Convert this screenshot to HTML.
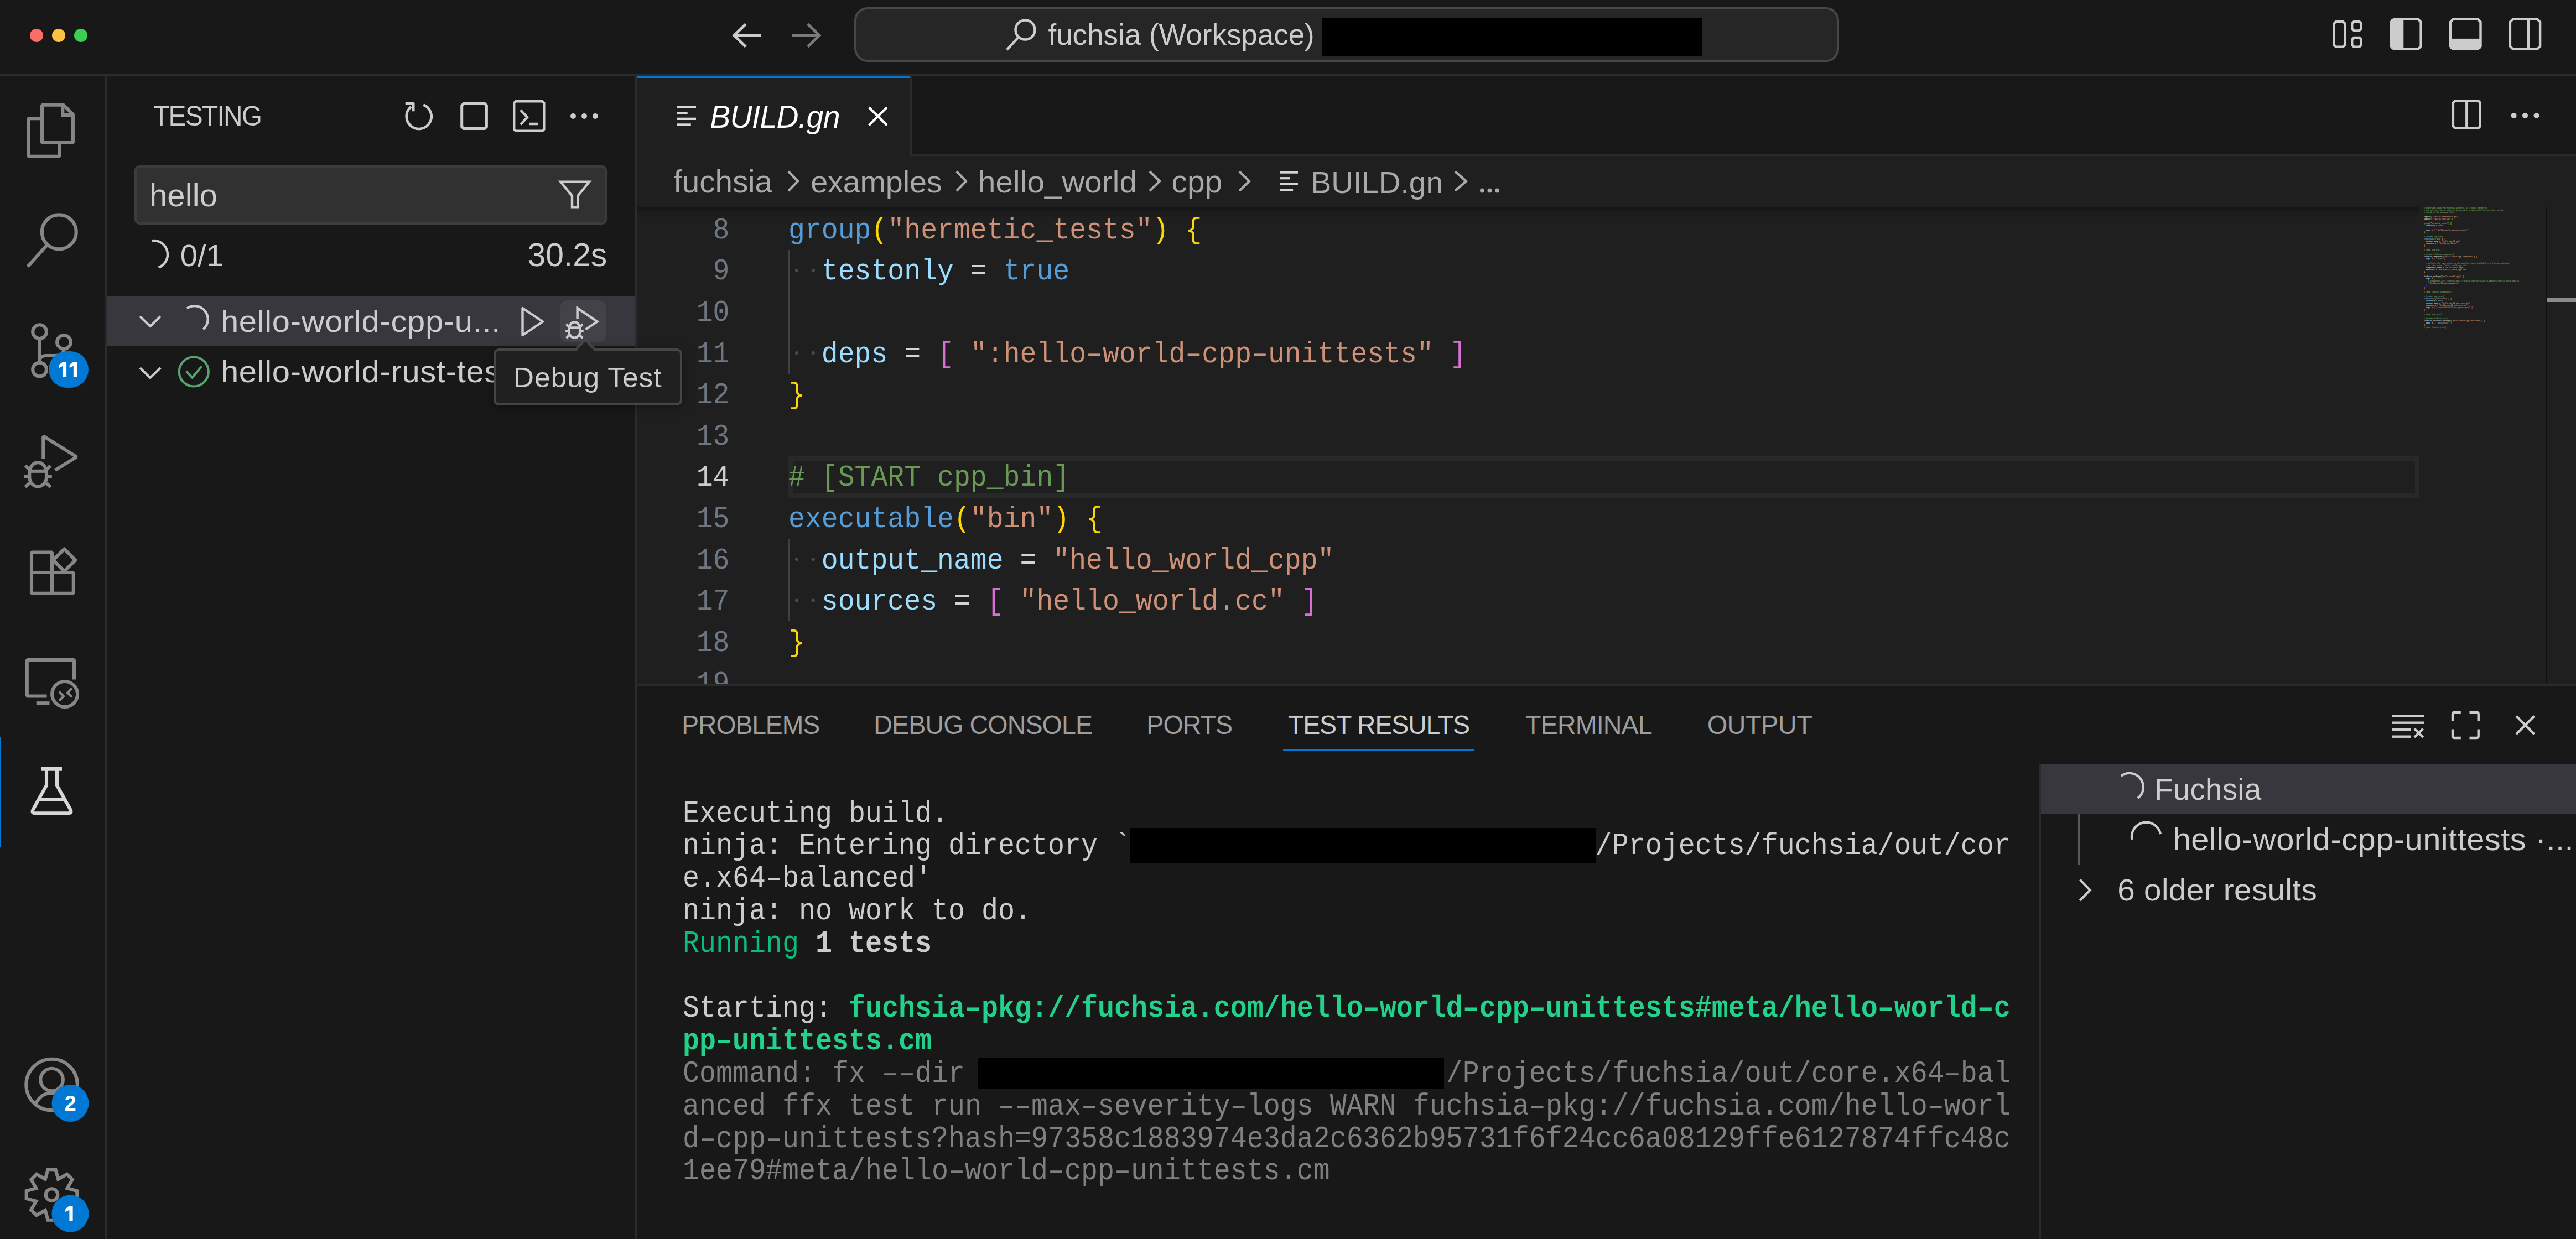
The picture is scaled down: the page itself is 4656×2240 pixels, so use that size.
<!DOCTYPE html>
<html><head><meta charset="utf-8"><style>
html,body{margin:0;padding:0;}
body{width:4656px;height:2240px;overflow:hidden;position:relative;background:#181818;font-family:'Liberation Sans', sans-serif;}
</style></head><body>
<div style="position:absolute;left:0px;top:0px;width:4656px;height:133px;background:#181818;"></div><div style="position:absolute;left:0px;top:133px;width:4656px;height:4px;background:#2b2b2b;"></div><div style="position:absolute;left:0px;top:137px;width:189px;height:2103px;background:#181818;"></div><div style="position:absolute;left:189px;top:137px;width:4px;height:2103px;background:#2b2b2b;"></div><div style="position:absolute;left:193px;top:137px;width:954px;height:2103px;background:#181818;"></div><div style="position:absolute;left:1147px;top:137px;width:4px;height:2103px;background:#2b2b2b;"></div><div style="position:absolute;left:1151px;top:137px;width:3505px;height:141px;background:#181818;"></div><div style="position:absolute;left:1649px;top:278px;width:3007px;height:4px;background:#2b2b2b;"></div><div style="position:absolute;left:1151px;top:137px;width:494px;height:145px;background:#1f1f1f;"></div><div style="position:absolute;left:1151px;top:137px;width:494px;height:4px;background:#0078d4;"></div><div style="position:absolute;left:1645px;top:137px;width:4px;height:145px;background:#2b2b2b;"></div><div style="position:absolute;left:1151px;top:282px;width:3505px;height:954px;background:#1f1f1f;"></div><div style="position:absolute;left:1151px;top:1236px;width:3505px;height:4px;background:#2b2b2b;"></div><div style="position:absolute;left:1151px;top:1240px;width:3505px;height:1000px;background:#181818;"></div><div style="position:absolute;left:1544px;top:13px;width:1780px;height:99px;box-sizing:border-box;border:4px solid #474747;border-radius:24px;background:#262626"></div><div style="position:absolute;left:1894.47px;top:36.71px;font-family:'Liberation Sans', sans-serif;font-size:52.91px;line-height:52.91px;color:#cccccc;font-weight:normal;font-style:normal;white-space:pre;">fuchsia (Workspace)</div><div style="position:absolute;left:2390px;top:32px;width:687px;height:69px;background:#000000;"></div><div style="position:absolute;left:0px;top:1332px;width:2px;height:199px;background:#0078d4;"></div><div style="position:absolute;left:277.04px;top:186.51px;font-family:'Liberation Sans', sans-serif;font-size:47.83px;line-height:47.83px;color:#cccccc;font-weight:normal;font-style:normal;white-space:pre;letter-spacing:-1.71px;transform:scaleY(1.051);transform-origin:0 40.49px;">TESTING</div><div style="position:absolute;left:243px;top:299px;width:854px;height:107px;box-sizing:border-box;border:4px solid #3c3c3c;border-radius:9px;background:#313131"></div><div style="position:absolute;left:269.94px;top:323.88px;font-family:'Liberation Sans', sans-serif;font-size:58.03px;line-height:58.03px;color:#cccccc;font-weight:normal;font-style:normal;white-space:pre;letter-spacing:0.11px;">hello</div><div style="position:absolute;left:325.75px;top:434.35px;font-family:'Liberation Sans', sans-serif;font-size:56.29px;line-height:56.29px;color:#cccccc;font-weight:normal;font-style:normal;white-space:pre;">0/1</div><div style="position:absolute;left:953.45px;top:432.23px;font-family:'Liberation Sans', sans-serif;font-size:58.8px;line-height:58.8px;color:#cccccc;font-weight:normal;font-style:normal;white-space:pre;">30.2s</div><div style="position:absolute;left:193px;top:535px;width:954px;height:91px;background:#37373d;"></div><div style="position:absolute;left:398.95px;top:552.30px;font-family:'Liberation Sans', sans-serif;font-size:57.88px;line-height:57.88px;color:#cccccc;font-weight:normal;font-style:normal;white-space:pre;letter-spacing:0.7px;transform:scaleY(0.973);transform-origin:0 49.00px;">hello-world-cpp-u...</div><div style="position:absolute;left:1013px;top:543px;width:82px;height:75px;border-radius:12px;background:#424248"></div><div style="position:absolute;left:398.95px;top:643.30px;font-family:'Liberation Sans', sans-serif;font-size:57.88px;line-height:57.88px;color:#cccccc;font-weight:normal;font-style:normal;white-space:pre;letter-spacing:0.7px;transform:scaleY(0.973);transform-origin:0 49.00px;">hello-world-rust-tests</div><div style="position:absolute;left:892px;top:630px;width:341px;height:103px;box-sizing:border-box;border:4px solid #454545;border-radius:10px;background:#202020;box-shadow:0 4px 16px rgba(0,0,0,0.36)"></div><div style="position:absolute;left:927.87px;top:657.30px;font-family:'Liberation Sans', sans-serif;font-size:51.62px;line-height:51.62px;color:#cccccc;font-weight:normal;font-style:normal;white-space:pre;letter-spacing:0.83px;transform:scaleY(0.971);transform-origin:0 43.70px;">Debug Test</div><div style="position:absolute;left:1283.34px;top:185.27px;font-family:'Liberation Sans', sans-serif;font-size:55.44px;line-height:55.44px;color:#ffffff;font-weight:normal;font-style:italic;white-space:pre;letter-spacing:-0.74px;transform:scaleY(1.022);transform-origin:0 46.93px;">BUILD.gn</div><div style="position:absolute;left:1217.23px;top:301.25px;font-family:'Liberation Sans', sans-serif;font-size:56.65px;line-height:56.65px;color:#a9a9a9;font-weight:normal;font-style:normal;white-space:pre;letter-spacing:-0.1px;">fuchsia</div><div style="position:absolute;left:1465.27px;top:302.02px;font-family:'Liberation Sans', sans-serif;font-size:55.74px;line-height:55.74px;color:#a9a9a9;font-weight:normal;font-style:normal;white-space:pre;letter-spacing:-0.17px;">examples</div><div style="position:absolute;left:1768.05px;top:301.49px;font-family:'Liberation Sans', sans-serif;font-size:56.36px;line-height:56.36px;color:#a9a9a9;font-weight:normal;font-style:normal;white-space:pre;letter-spacing:0.17px;">hello_world</div><div style="position:absolute;left:2117.50px;top:301.12px;font-family:'Liberation Sans', sans-serif;font-size:56.8px;line-height:56.8px;color:#a9a9a9;font-weight:normal;font-style:normal;white-space:pre;">cpp</div><div style="position:absolute;left:2369.60px;top:302.63px;font-family:'Liberation Sans', sans-serif;font-size:55.01px;line-height:55.01px;color:#a9a9a9;font-weight:normal;font-style:normal;white-space:pre;">BUILD.gn</div><div style="position:absolute;left:1151px;top:374px;width:3222px;height:22px;background:linear-gradient(rgba(0,0,0,0.36),rgba(0,0,0,0.12) 40%,rgba(0,0,0,0))"></div><div style="position:absolute;left:0;top:0;width:4656px;height:2240px;clip-path:inset(374px 0 1004px 1151px)"><div style="position:absolute;left:1425px;top:825px;width:2948px;height:75px;box-sizing:border-box;border:8px solid #282828"></div><div style="position:absolute;left:1424px;top:452.0px;width:4px;height:223.79999999999995px;background:#404040;"></div><div style="position:absolute;left:1424px;top:974.2px;width:4px;height:149.20000000000005px;background:#404040;"></div><div style="position:absolute;left:1288.60px;top:393.83px;font-family:'Liberation Mono', monospace;font-size:49.825859454415166px;line-height:49.825859454415166px;color:#6e7681;font-weight:normal;font-style:normal;white-space:pre;transform:scaleY(1.08);transform-origin:0 38.17px;">8</div><div style="position:absolute;left:1425.00px;top:393.83px;font-family:'Liberation Mono', monospace;font-size:49.825859454415166px;line-height:49.825859454415166px;color:#d4d4d4;font-weight:normal;font-style:normal;white-space:pre;transform:scaleY(1.08);transform-origin:0 38.17px;"><span style="color:#569cd6">group</span><span style="color:#ffd700">(</span><span style="color:#ce9178">&quot;hermetic_tests&quot;</span><span style="color:#ffd700">)</span><span style="color:#d4d4d4"> </span><span style="color:#ffd700">{</span></div><div style="position:absolute;left:1288.60px;top:468.43px;font-family:'Liberation Mono', monospace;font-size:49.825859454415166px;line-height:49.825859454415166px;color:#6e7681;font-weight:normal;font-style:normal;white-space:pre;transform:scaleY(1.08);transform-origin:0 38.17px;">9</div><div style="position:absolute;left:1425.00px;top:468.43px;font-family:'Liberation Mono', monospace;font-size:49.825859454415166px;line-height:49.825859454415166px;color:#d4d4d4;font-weight:normal;font-style:normal;white-space:pre;transform:scaleY(1.08);transform-origin:0 38.17px;">  <span style="color:#9cdcfe">testonly</span><span style="color:#d4d4d4"> = </span><span style="color:#569cd6">true</span></div><div style="position:absolute;left:1258.70px;top:543.03px;font-family:'Liberation Mono', monospace;font-size:49.825859454415166px;line-height:49.825859454415166px;color:#6e7681;font-weight:normal;font-style:normal;white-space:pre;transform:scaleY(1.08);transform-origin:0 38.17px;">10</div><div style="position:absolute;left:1258.70px;top:617.63px;font-family:'Liberation Mono', monospace;font-size:49.825859454415166px;line-height:49.825859454415166px;color:#6e7681;font-weight:normal;font-style:normal;white-space:pre;transform:scaleY(1.08);transform-origin:0 38.17px;">11</div><div style="position:absolute;left:1425.00px;top:617.63px;font-family:'Liberation Mono', monospace;font-size:49.825859454415166px;line-height:49.825859454415166px;color:#d4d4d4;font-weight:normal;font-style:normal;white-space:pre;transform:scaleY(1.08);transform-origin:0 38.17px;">  <span style="color:#9cdcfe">deps</span><span style="color:#d4d4d4"> = </span><span style="color:#da70d6">[</span><span style="color:#d4d4d4"> </span><span style="color:#ce9178">&quot;:hello–world–cpp–unittests&quot;</span><span style="color:#d4d4d4"> </span><span style="color:#da70d6">]</span></div><div style="position:absolute;left:1258.70px;top:692.23px;font-family:'Liberation Mono', monospace;font-size:49.825859454415166px;line-height:49.825859454415166px;color:#6e7681;font-weight:normal;font-style:normal;white-space:pre;transform:scaleY(1.08);transform-origin:0 38.17px;">12</div><div style="position:absolute;left:1425.00px;top:692.23px;font-family:'Liberation Mono', monospace;font-size:49.825859454415166px;line-height:49.825859454415166px;color:#d4d4d4;font-weight:normal;font-style:normal;white-space:pre;transform:scaleY(1.08);transform-origin:0 38.17px;"><span style="color:#ffd700">}</span></div><div style="position:absolute;left:1258.70px;top:766.83px;font-family:'Liberation Mono', monospace;font-size:49.825859454415166px;line-height:49.825859454415166px;color:#6e7681;font-weight:normal;font-style:normal;white-space:pre;transform:scaleY(1.08);transform-origin:0 38.17px;">13</div><div style="position:absolute;left:1258.70px;top:841.43px;font-family:'Liberation Mono', monospace;font-size:49.825859454415166px;line-height:49.825859454415166px;color:#cccccc;font-weight:normal;font-style:normal;white-space:pre;transform:scaleY(1.08);transform-origin:0 38.17px;">14</div><div style="position:absolute;left:1425.00px;top:841.43px;font-family:'Liberation Mono', monospace;font-size:49.825859454415166px;line-height:49.825859454415166px;color:#d4d4d4;font-weight:normal;font-style:normal;white-space:pre;transform:scaleY(1.08);transform-origin:0 38.17px;"><span style="color:#6a9955"># [START cpp_bin]</span></div><div style="position:absolute;left:1258.70px;top:916.03px;font-family:'Liberation Mono', monospace;font-size:49.825859454415166px;line-height:49.825859454415166px;color:#6e7681;font-weight:normal;font-style:normal;white-space:pre;transform:scaleY(1.08);transform-origin:0 38.17px;">15</div><div style="position:absolute;left:1425.00px;top:916.03px;font-family:'Liberation Mono', monospace;font-size:49.825859454415166px;line-height:49.825859454415166px;color:#d4d4d4;font-weight:normal;font-style:normal;white-space:pre;transform:scaleY(1.08);transform-origin:0 38.17px;"><span style="color:#569cd6">executable</span><span style="color:#ffd700">(</span><span style="color:#ce9178">&quot;bin&quot;</span><span style="color:#ffd700">)</span><span style="color:#d4d4d4"> </span><span style="color:#ffd700">{</span></div><div style="position:absolute;left:1258.70px;top:990.63px;font-family:'Liberation Mono', monospace;font-size:49.825859454415166px;line-height:49.825859454415166px;color:#6e7681;font-weight:normal;font-style:normal;white-space:pre;transform:scaleY(1.08);transform-origin:0 38.17px;">16</div><div style="position:absolute;left:1425.00px;top:990.63px;font-family:'Liberation Mono', monospace;font-size:49.825859454415166px;line-height:49.825859454415166px;color:#d4d4d4;font-weight:normal;font-style:normal;white-space:pre;transform:scaleY(1.08);transform-origin:0 38.17px;">  <span style="color:#9cdcfe">output_name</span><span style="color:#d4d4d4"> = </span><span style="color:#ce9178">&quot;hello_world_cpp&quot;</span></div><div style="position:absolute;left:1258.70px;top:1065.23px;font-family:'Liberation Mono', monospace;font-size:49.825859454415166px;line-height:49.825859454415166px;color:#6e7681;font-weight:normal;font-style:normal;white-space:pre;transform:scaleY(1.08);transform-origin:0 38.17px;">17</div><div style="position:absolute;left:1425.00px;top:1065.23px;font-family:'Liberation Mono', monospace;font-size:49.825859454415166px;line-height:49.825859454415166px;color:#d4d4d4;font-weight:normal;font-style:normal;white-space:pre;transform:scaleY(1.08);transform-origin:0 38.17px;">  <span style="color:#9cdcfe">sources</span><span style="color:#d4d4d4"> = </span><span style="color:#da70d6">[</span><span style="color:#d4d4d4"> </span><span style="color:#ce9178">&quot;hello_world.cc&quot;</span><span style="color:#d4d4d4"> </span><span style="color:#da70d6">]</span></div><div style="position:absolute;left:1258.70px;top:1139.83px;font-family:'Liberation Mono', monospace;font-size:49.825859454415166px;line-height:49.825859454415166px;color:#6e7681;font-weight:normal;font-style:normal;white-space:pre;transform:scaleY(1.08);transform-origin:0 38.17px;">18</div><div style="position:absolute;left:1425.00px;top:1139.83px;font-family:'Liberation Mono', monospace;font-size:49.825859454415166px;line-height:49.825859454415166px;color:#d4d4d4;font-weight:normal;font-style:normal;white-space:pre;transform:scaleY(1.08);transform-origin:0 38.17px;"><span style="color:#ffd700">}</span></div><div style="position:absolute;left:1258.70px;top:1214.43px;font-family:'Liberation Mono', monospace;font-size:49.825859454415166px;line-height:49.825859454415166px;color:#6e7681;font-weight:normal;font-style:normal;white-space:pre;transform:scaleY(1.08);transform-origin:0 38.17px;">19</div></div><div style="position:absolute;left:4602px;top:374px;width:1px;height:862px;background:#111111;"></div><div style="position:absolute;left:4602px;top:374px;width:54px;height:1px;background:#111111;"></div><div style="position:absolute;left:4603px;top:538px;width:53px;height:8px;background:#8b8b8b;"></div><div style="position:absolute;left:1232.29px;top:1287.75px;font-family:'Liberation Sans', sans-serif;font-size:46.37px;line-height:46.37px;color:#9d9d9d;font-weight:normal;font-style:normal;white-space:pre;letter-spacing:-1.12px;transform:scaleY(1.031);transform-origin:0 39.25px;">PROBLEMS</div><div style="position:absolute;left:1579.27px;top:1287.57px;font-family:'Liberation Sans', sans-serif;font-size:46.58px;line-height:46.58px;color:#9d9d9d;font-weight:normal;font-style:normal;white-space:pre;letter-spacing:-0.88px;transform:scaleY(1.026);transform-origin:0 39.43px;">DEBUG CONSOLE</div><div style="position:absolute;left:2072.27px;top:1287.53px;font-family:'Liberation Sans', sans-serif;font-size:46.63px;line-height:46.63px;color:#9d9d9d;font-weight:normal;font-style:normal;white-space:pre;letter-spacing:-0.97px;transform:scaleY(1.025);transform-origin:0 39.47px;">PORTS</div><div style="position:absolute;left:2328.07px;top:1287.90px;font-family:'Liberation Sans', sans-serif;font-size:46.55px;line-height:46.55px;color:#cccccc;font-weight:normal;font-style:normal;white-space:pre;letter-spacing:-1.21px;transform:scaleY(1.039);transform-origin:0 39.40px;">TEST RESULTS</div><div style="position:absolute;left:2319px;top:1354px;width:346px;height:4px;background:#0078d4;"></div><div style="position:absolute;left:2757.07px;top:1287.54px;font-family:'Liberation Sans', sans-serif;font-size:46.61px;line-height:46.61px;color:#9d9d9d;font-weight:normal;font-style:normal;white-space:pre;letter-spacing:-0.86px;transform:scaleY(1.026);transform-origin:0 39.46px;">TERMINAL</div><div style="position:absolute;left:3085.65px;top:1287.17px;font-family:'Liberation Sans', sans-serif;font-size:47.05px;line-height:47.05px;color:#9d9d9d;font-weight:normal;font-style:normal;white-space:pre;letter-spacing:-0.62px;transform:scaleY(1.016);transform-origin:0 39.83px;">OUTPUT</div><div style="position:absolute;left:1234.00px;top:1447.70px;font-family:'Liberation Mono', monospace;font-size:49.99250112483127px;line-height:49.99250112483127px;color:#cccccc;font-weight:normal;font-style:normal;white-space:pre;transform:scaleY(1.1);transform-origin:0 38.30px;"><span style="color:#cccccc;font-weight:normal">Executing build.</span></div><div style="position:absolute;left:1234.00px;top:1506.48px;font-family:'Liberation Mono', monospace;font-size:49.99250112483127px;line-height:49.99250112483127px;color:#cccccc;font-weight:normal;font-style:normal;white-space:pre;transform:scaleY(1.1);transform-origin:0 38.30px;"><span style="color:#cccccc;font-weight:normal">ninja: Entering directory `</span><span style="color:#cccccc;font-weight:normal">                            </span><span style="color:#cccccc;font-weight:normal">/Projects/fuchsia/out/cor</span></div><div style="position:absolute;left:2043px;top:1496.5px;width:840.5px;height:64.5px;background:#000000;"></div><div style="position:absolute;left:1234.00px;top:1565.26px;font-family:'Liberation Mono', monospace;font-size:49.99250112483127px;line-height:49.99250112483127px;color:#cccccc;font-weight:normal;font-style:normal;white-space:pre;transform:scaleY(1.1);transform-origin:0 38.30px;"><span style="color:#cccccc;font-weight:normal">e.x64–balanced&#x27;</span></div><div style="position:absolute;left:1234.00px;top:1624.04px;font-family:'Liberation Mono', monospace;font-size:49.99250112483127px;line-height:49.99250112483127px;color:#cccccc;font-weight:normal;font-style:normal;white-space:pre;transform:scaleY(1.1);transform-origin:0 38.30px;"><span style="color:#cccccc;font-weight:normal">ninja: no work to do.</span></div><div style="position:absolute;left:1234.00px;top:1682.82px;font-family:'Liberation Mono', monospace;font-size:49.99250112483127px;line-height:49.99250112483127px;color:#cccccc;font-weight:normal;font-style:normal;white-space:pre;transform:scaleY(1.1);transform-origin:0 38.30px;"><span style="color:#0dbc79;font-weight:normal">Running</span><span style="color:#cccccc;font-weight:bold"> 1 tests</span></div><div style="position:absolute;left:1234.00px;top:1800.38px;font-family:'Liberation Mono', monospace;font-size:49.99250112483127px;line-height:49.99250112483127px;color:#cccccc;font-weight:normal;font-style:normal;white-space:pre;transform:scaleY(1.1);transform-origin:0 38.30px;"><span style="color:#cccccc;font-weight:normal">Starting: </span><span style="color:#23d18b;font-weight:bold">fuchsia–pkg://fuchsia.com/hello–world–cpp–unittests#meta/hello–world–c</span></div><div style="position:absolute;left:1234.00px;top:1859.16px;font-family:'Liberation Mono', monospace;font-size:49.99250112483127px;line-height:49.99250112483127px;color:#cccccc;font-weight:normal;font-style:normal;white-space:pre;transform:scaleY(1.1);transform-origin:0 38.30px;"><span style="color:#23d18b;font-weight:bold">pp–unittests.cm</span></div><div style="position:absolute;left:1234.00px;top:1917.94px;font-family:'Liberation Mono', monospace;font-size:49.99250112483127px;line-height:49.99250112483127px;color:#cccccc;font-weight:normal;font-style:normal;white-space:pre;transform:scaleY(1.1);transform-origin:0 38.30px;"><span style="color:#808080;font-weight:normal">Command: fx ––dir </span><span style="color:#808080;font-weight:normal">                            </span><span style="color:#808080;font-weight:normal">/Projects/fuchsia/out/core.x64–bal</span></div><div style="position:absolute;left:1768px;top:1913px;width:842px;height:56px;background:#000000;"></div><div style="position:absolute;left:1234.00px;top:1976.72px;font-family:'Liberation Mono', monospace;font-size:49.99250112483127px;line-height:49.99250112483127px;color:#cccccc;font-weight:normal;font-style:normal;white-space:pre;transform:scaleY(1.1);transform-origin:0 38.30px;"><span style="color:#808080;font-weight:normal">anced ffx test run ––max–severity–logs WARN fuchsia–pkg://fuchsia.com/hello–worl</span></div><div style="position:absolute;left:1234.00px;top:2035.50px;font-family:'Liberation Mono', monospace;font-size:49.99250112483127px;line-height:49.99250112483127px;color:#cccccc;font-weight:normal;font-style:normal;white-space:pre;transform:scaleY(1.1);transform-origin:0 38.30px;"><span style="color:#808080;font-weight:normal">d–cpp–unittests?hash=97358c1883974e3da2c6362b95731f6f24cc6a08129ffe6127874ffc48c</span></div><div style="position:absolute;left:1234.00px;top:2094.28px;font-family:'Liberation Mono', monospace;font-size:49.99250112483127px;line-height:49.99250112483127px;color:#cccccc;font-weight:normal;font-style:normal;white-space:pre;transform:scaleY(1.1);transform-origin:0 38.30px;"><span style="color:#808080;font-weight:normal">1ee79#meta/hello–world–cpp–unittests.cm</span></div><div style="position:absolute;left:3627px;top:1381px;width:1px;height:859px;background:#050505;"></div><div style="position:absolute;left:3627px;top:1381px;width:58px;height:1px;background:#050505;"></div><div style="position:absolute;left:3685px;top:1381px;width:4px;height:859px;background:#2b2b2b;"></div><div style="position:absolute;left:3689px;top:1381px;width:967px;height:91px;background:#37373d;"></div><div style="position:absolute;left:3894.22px;top:1400.21px;font-family:'Liberation Sans', sans-serif;font-size:54.8px;line-height:54.8px;color:#cccccc;font-weight:normal;font-style:normal;white-space:pre;letter-spacing:0.17px;">Fuchsia</div><div style="position:absolute;left:3755px;top:1472px;width:4px;height:91px;background:#585858;"></div><div style="position:absolute;left:3927.65px;top:1489.24px;font-family:'Liberation Sans', sans-serif;font-size:57.84px;line-height:57.84px;color:#cccccc;font-weight:normal;font-style:normal;white-space:pre;letter-spacing:0.47px;transform:scaleY(0.98);transform-origin:0 48.96px;">hello-world-cpp-unittests ·...</div><div style="position:absolute;left:3827.17px;top:1581.11px;font-family:'Liberation Sans', sans-serif;font-size:56.58px;line-height:56.58px;color:#cccccc;font-weight:normal;font-style:normal;white-space:pre;letter-spacing:0.37px;transform:scaleY(0.985);transform-origin:0 47.89px;">6 older results</div>
<svg width="4656" height="2240" style="position:absolute;left:0;top:0">
<circle cx="66" cy="64" r="12" fill="#fc6d67"/><circle cx="106" cy="64" r="12" fill="#fdc243"/><circle cx="146" cy="64" r="12" fill="#3ecd53"/><path d="M1376 64 H1328 M1348 43.5 L1327 64 L1348 84.5" stroke="#cccccc" stroke-width="5" fill="none"/><path d="M1432 64 H1480 M1460 43.5 L1481 64 L1460 84.5" stroke="#7a7a7a" stroke-width="5" fill="none"/><circle cx="1853" cy="54" r="17.5" stroke="#cccccc" stroke-width="4.5" fill="none"/><path d="M1841 67 L1820 90" stroke="#cccccc" stroke-width="4.5" fill="none"/><path d="M4222.2 39 H4234.8 L4238.8 43 V80.8 L4234.8 84.8 H4222.2 L4218.2 80.8 V43 Z" stroke="#cccccc" stroke-width="4.4" fill="none"/><path d="M4254.7 39 H4264.3 L4267.8 42.5 V51.9 L4264.3 55.4 H4254.7 L4251.2 51.9 V42.5 Z" stroke="#cccccc" stroke-width="4.4" fill="none"/><path d="M4254.7 68 H4264.3 L4267.8 71.5 V81.3 L4264.3 84.8 H4254.7 L4251.2 81.3 V71.5 Z" stroke="#cccccc" stroke-width="4.4" fill="none"/><path d="M4326.7 34.7 H4370.6 L4375.6 39.7 V83.7 L4370.6 88.7 H4326.7 L4321.7 83.7 V39.7 Z" stroke="#cccccc" stroke-width="4.4" fill="none"/><rect x="4321.7" y="34.7" width="22.6" height="54" fill="#cccccc"/><path d="M4434 34.7 H4478.5 L4483.5 39.7 V83.7 L4478.5 88.7 H4434 L4429 83.7 V39.7 Z" stroke="#cccccc" stroke-width="4.4" fill="none"/><rect x="4429" y="69.9" width="54.5" height="18.8" fill="#cccccc"/><path d="M4541.9 34.7 H4586.1 L4591.1 39.7 V83.7 L4586.1 88.7 H4541.9 L4536.9 83.7 V39.7 Z" stroke="#cccccc" stroke-width="4.4" fill="none"/><path d="M4570 35 V88" stroke="#cccccc" stroke-width="4.4" fill="none"/><path d="M76 214.1 H51.1 V282.8 H107.1 V258" stroke="#868686" stroke-width="6.1" fill="none" stroke-linejoin="bevel"/><path d="M76 189.8 H115 L131.9 206.8 V258 H76 Z" stroke="#868686" stroke-width="6.1" fill="none" stroke-linejoin="bevel"/><path d="M113.3 189.8 V208 H131.9" stroke="#868686" stroke-width="6.1" fill="none" stroke-linejoin="miter"/><circle cx="106.8" cy="419.4" r="31" stroke="#868686" stroke-width="6.1" fill="none"/><path d="M85 443 L50 482" stroke="#868686" stroke-width="6.1" fill="none"/><circle cx="71.6" cy="599.7" r="12.4" stroke="#868686" stroke-width="6.1" fill="none"/><circle cx="115.5" cy="618.4" r="12.4" stroke="#868686" stroke-width="6.1" fill="none"/><circle cx="71.6" cy="668" r="12.4" stroke="#868686" stroke-width="6.1" fill="none"/><path d="M71.6 612 V655.6 M71.6 652 C71.6 646 76 643 84 643 H100 C110 643 115.5 638 115.5 631" stroke="#868686" stroke-width="6.1" fill="none"/><path d="M78.3 829 V788.4 L138.6 826 L99.8 850" stroke="#868686" stroke-width="6.1" fill="none" stroke-linejoin="bevel"/><g transform="translate(68.6,858) scale(1.0)" stroke="#868686" stroke-width="6.1" fill="none"><path d="M-15.4 4 C-15.4 14 -8.6 21.7 0 21.7 C8.6 21.7 15.4 14 15.4 4 V-2 C15.4 -12 9.4 -21.9 0 -21.9 C-9.4 -21.9 -15.4 -12 -15.4 -2 Z"/><path d="M-13.5 -6.2 H13.5"/><path d="M-22.9 -16.1 L-16 -9.3 M22.8 -16.1 L16 -9.3 M-25 3 H-16 M16 3 H25.2 M-22.9 22.7 L-15.5 15.4 M22.8 22.7 L15.4 15.4"/></g><path d="M57 998.5 H94 V1035 H132.8 V1072.8 H57 Z M57 1035 H94 V1072.8" stroke="#868686" stroke-width="6.1" fill="none" stroke-linejoin="bevel"/><path d="M116.2 992.5 L136.3 1012.6 L116.2 1032.7 L96.1 1012.6 Z" stroke="#868686" stroke-width="6.1" fill="none" stroke-linejoin="round"/><path d="M84.6 1258.5 H48.8 V1193 H134 V1228.5" stroke="#868686" stroke-width="6.1" fill="none" stroke-linejoin="bevel"/><path d="M65.7 1271.2 H89.5" stroke="#868686" stroke-width="6.1" fill="none"/><circle cx="117.1" cy="1255" r="23" stroke="#868686" stroke-width="6.1" fill="none"/><path d="M107 1250.5 L115 1258.8 L107 1267 M130 1244.5 L122 1252.5 L130 1260.5" stroke="#868686" stroke-width="4.2" fill="none"/><path d="M75 1389.8 H112 M84 1389.8 V1420 L59.5 1464 Q56.5 1470.3 63.5 1470.3 H123.5 Q130.5 1470.3 127.5 1464 L103 1420 V1389.8 M69.5 1446 H117.5" stroke="#d7d7d7" stroke-width="6.1" fill="none" stroke-linejoin="miter"/><circle cx="93.6" cy="1961" r="46.3" stroke="#868686" stroke-width="6.1" fill="none"/><circle cx="93.6" cy="1952" r="20.3" stroke="#868686" stroke-width="6.1" fill="none"/><path d="M64 1997 C70 1983 80 1976 93.6 1976 C107 1976 117 1983 123 1997" stroke="#868686" stroke-width="6.1" fill="none"/><path d="M81.8 2131.8 L86.6 2114.2 L100.4 2114.2 L105.2 2131.8 L121.0 2122.8 L130.7 2132.5 L121.7 2148.3 L139.3 2153.1 L139.3 2166.9 L121.7 2171.7 L130.7 2187.5 L121.0 2197.2 L105.2 2188.2 L100.4 2205.8 L86.6 2205.8 L81.8 2188.2 L66.0 2197.2 L56.3 2187.5 L65.3 2171.7 L47.7 2166.9 L47.7 2153.1 L65.3 2148.3 L56.3 2132.5 L66.0 2122.8 Z" stroke="#868686" stroke-width="6.1" fill="none" stroke-linejoin="miter" stroke-miterlimit="10"/><circle cx="93.5" cy="2160" r="10.8" stroke="#868686" stroke-width="6.1" fill="none"/><rect x="88.0" y="635.0" width="72" height="66" rx="33.0" fill="#0078d4"/><path d="M112.9 654.8 H120.1 V682.0 H113.9 V661.6 L106.8 665.2 V659.6 Z" fill="#ffffff"/><path d="M131.8 654.8 H139.0 V682.0 H132.8 V661.6 L125.7 665.2 V659.6 Z" fill="#ffffff"/><rect x="93.5" y="1961.0" width="67" height="67" rx="33.5" fill="#0078d4"/><text x="127" y="2008.3" text-anchor="middle" font-family="Liberation Sans" font-weight="bold" font-size="38" fill="#ffffff">2</text><rect x="93.5" y="2160.5" width="67" height="67" rx="33.5" fill="#0078d4"/><path d="M124.4 2180.8 H131.6 V2208.0 H125.4 V2187.6 L118.3 2191.2 V2185.6 Z" fill="#ffffff"/><path d="M765.3 189.5 A22.5 22.5 0 1 1 743 193" stroke="#cccccc" stroke-width="4.7" fill="none"/><path d="M732.7 186.9 H747.2 V201.3" stroke="#cccccc" stroke-width="4.7" fill="none" stroke-linejoin="round"/><path d="M838.2 187.2 H875.9 L879.4 190.7 V229.1 L875.9 232.6 H838.2 L834.7 229.1 V190.7 Z" stroke="#cccccc" stroke-width="5" fill="none"/><path d="M932.2 183.2 H980.3 L983.3 186.2 V233.8 L980.3 236.8 H932.2 L929.2 233.8 V186.2 Z" stroke="#cccccc" stroke-width="4.4" fill="none"/><path d="M941 199 L953 212 L941 225 M957 224 H973" stroke="#cccccc" stroke-width="4.4" fill="none"/><circle cx="1036" cy="210" r="5" fill="#cccccc"/><circle cx="1056" cy="210" r="5" fill="#cccccc"/><circle cx="1076" cy="210" r="5" fill="#cccccc"/><path d="M1013.5 328.8 H1065 L1044.3 354 V374.3 H1034 V354 Z" stroke="#cccccc" stroke-width="4.4" fill="none" stroke-linejoin="miter"/><path d="M274.95 435.2 A25 25 0 0 1 286.55 483.5" stroke="#cccccc" stroke-width="4.4" fill="none"/><path d="M253 572 L271.5 590 L290 572" stroke="#cccccc" stroke-width="4.4" fill="none"/><path d="M337.9 557.6 A24 24 0 0 1 367.4 595.4" stroke="#cccccc" stroke-width="4.4" fill="none"/><path d="M944.5 557 V606 L981 581.5 Z" stroke="#cccccc" stroke-width="4.4" fill="none" stroke-linejoin="round"/><path d="M1043.6 576 V557 L1079.5 581.5 L1058.4 595.5" stroke="#cccccc" stroke-width="4.4" fill="none"/><g transform="translate(1038.4,596.5) scale(0.65)" stroke="#cccccc" stroke-width="6.769230769230769" fill="none"><path d="M-15.4 4 C-15.4 14 -8.6 21.7 0 21.7 C8.6 21.7 15.4 14 15.4 4 V-2 C15.4 -12 9.4 -21.9 0 -21.9 C-9.4 -21.9 -15.4 -12 -15.4 -2 Z"/><path d="M-13.5 -6.2 H13.5"/><path d="M-22.9 -16.1 L-16 -9.3 M22.8 -16.1 L16 -9.3 M-25 3 H-16 M16 3 H25.2 M-22.9 22.7 L-15.5 15.4 M22.8 22.7 L15.4 15.4"/></g><path d="M253 665 L271.5 683 L290 665" stroke="#cccccc" stroke-width="4.4" fill="none"/><circle cx="350.3" cy="672" r="26.5" stroke="#58a36f" stroke-width="4.2" fill="none"/><path d="M336.5 671 L347.5 682.5 L364.5 662.5" stroke="#58a36f" stroke-width="4.2" fill="none"/><path d="M1039 633.5 L1058 614.5 L1077 633.5" stroke="#454545" stroke-width="4" fill="#202020"/><path d="M1042.5 635 L1058 619.5 L1073.5 635 Z" fill="#202020"/><rect x="1224" y="191.5" width="34.0" height="4.3" fill="#d8d8d8"/><rect x="1224" y="202.1" width="18.7" height="4.3" fill="#d8d8d8"/><rect x="1224" y="212.7" width="34.0" height="4.3" fill="#d8d8d8"/><rect x="1224" y="223.3" width="24.8" height="4.3" fill="#d8d8d8"/><path d="M1570.5 194 L1603 226.5 M1603 194 L1570.5 226.5" stroke="#ffffff" stroke-width="4.4" fill="none"/><path d="M4437.4 182.2 H4479.3 L4482.8 185.7 V228.3 L4479.3 231.8 H4437.4 L4433.9 228.3 V185.7 Z" stroke="#cccccc" stroke-width="4.4" fill="none"/><path d="M4458.3 182 V232" stroke="#cccccc" stroke-width="4.4" fill="none"/><circle cx="4543.5" cy="209" r="5" fill="#cccccc"/><circle cx="4564" cy="209" r="5" fill="#cccccc"/><circle cx="4584.5" cy="209" r="5" fill="#cccccc"/><path d="M1425 310 L1442 327.5 L1425 345" stroke="#a9a9a9" stroke-width="4.4" fill="none"/><path d="M1729 310 L1746 327.5 L1729 345" stroke="#a9a9a9" stroke-width="4.4" fill="none"/><path d="M2078 310 L2096 327.5 L2078 345" stroke="#a9a9a9" stroke-width="4.4" fill="none"/><path d="M2240 310 L2258 327.5 L2240 345" stroke="#a9a9a9" stroke-width="4.4" fill="none"/><rect x="2313" y="309.5" width="33.0" height="4.2" fill="#d4d4d4"/><rect x="2313" y="320.1" width="18.2" height="4.2" fill="#d4d4d4"/><rect x="2313" y="330.7" width="33.0" height="4.2" fill="#d4d4d4"/><rect x="2313" y="341.3" width="24.1" height="4.2" fill="#d4d4d4"/><path d="M2630 310 L2650 327.5 L2630 345" stroke="#a9a9a9" stroke-width="4.4" fill="none"/><circle cx="2679" cy="344.5" r="4" fill="#a9a9a9"/><circle cx="2692.5" cy="344.5" r="4" fill="#a9a9a9"/><circle cx="2706" cy="344.5" r="4" fill="#a9a9a9"/><circle cx="1440.0" cy="488.8" r="3.1" fill="#4a4a4a"/><circle cx="1469.8" cy="488.8" r="3.1" fill="#4a4a4a"/><circle cx="1440.0" cy="638.0" r="3.1" fill="#4a4a4a"/><circle cx="1469.8" cy="638.0" r="3.1" fill="#4a4a4a"/><circle cx="1440.0" cy="1011.0" r="3.1" fill="#4a4a4a"/><circle cx="1469.8" cy="1011.0" r="3.1" fill="#4a4a4a"/><circle cx="1440.0" cy="1085.6" r="3.1" fill="#4a4a4a"/><circle cx="1469.8" cy="1085.6" r="3.1" fill="#4a4a4a"/><text x="4381" y="377.4" font-family="Liberation Mono" font-size="3.333" font-weight="bold" xml:space="preserve" fill="#d4d4d4" fill-opacity="1"><tspan fill="#6a9955"># Copyright 2020 The Fuchsia Authors. All rights reserved.</tspan></text><text x="4381" y="381.4" font-family="Liberation Mono" font-size="3.333" font-weight="bold" xml:space="preserve" fill="#d4d4d4" fill-opacity="1"><tspan fill="#6a9955"># Use of this source code is governed by a BSD-style license that can be</tspan></text><text x="4381" y="385.4" font-family="Liberation Mono" font-size="3.333" font-weight="bold" xml:space="preserve" fill="#d4d4d4" fill-opacity="1"><tspan fill="#6a9955"># found in the LICENSE file.</tspan></text><text x="4381" y="393.4" font-family="Liberation Mono" font-size="3.333" font-weight="bold" xml:space="preserve" fill="#d4d4d4" fill-opacity="1"><tspan fill="#dcdcaa">import</tspan><tspan fill="#ffd700">(</tspan><tspan fill="#ce9178">&quot;//build/components.gni&quot;</tspan><tspan fill="#ffd700">)</tspan></text><text x="4381" y="397.4" font-family="Liberation Mono" font-size="3.333" font-weight="bold" xml:space="preserve" fill="#d4d4d4" fill-opacity="1"><tspan fill="#dcdcaa">import</tspan><tspan fill="#ffd700">(</tspan><tspan fill="#ce9178">&quot;//build/test.gni&quot;</tspan><tspan fill="#ffd700">)</tspan></text><text x="4381" y="405.4" font-family="Liberation Mono" font-size="3.333" font-weight="bold" xml:space="preserve" fill="#d4d4d4" fill-opacity="1"><tspan fill="#569cd6">group</tspan><tspan fill="#ffd700">(</tspan><tspan fill="#ce9178">&quot;hermetic_tests&quot;</tspan><tspan fill="#ffd700">)</tspan> <tspan fill="#ffd700">{</tspan></text><text x="4381" y="409.4" font-family="Liberation Mono" font-size="3.333" font-weight="bold" xml:space="preserve" fill="#d4d4d4" fill-opacity="1">  <tspan fill="#9cdcfe">testonly</tspan> <tspan fill="#d4d4d4">=</tspan> <tspan fill="#569cd6">true</tspan></text><text x="4381" y="417.4" font-family="Liberation Mono" font-size="3.333" font-weight="bold" xml:space="preserve" fill="#d4d4d4" fill-opacity="1">  <tspan fill="#9cdcfe">deps</tspan> <tspan fill="#d4d4d4">=</tspan> <tspan fill="#da70d6">[</tspan> <tspan fill="#ce9178">&quot;:hello-world-cpp-unittests&quot;</tspan> <tspan fill="#da70d6">]</tspan></text><text x="4381" y="421.4" font-family="Liberation Mono" font-size="3.333" font-weight="bold" xml:space="preserve" fill="#d4d4d4" fill-opacity="1"><tspan fill="#ffd700">}</tspan></text><text x="4381" y="429.4" font-family="Liberation Mono" font-size="3.333" font-weight="bold" xml:space="preserve" fill="#d4d4d4" fill-opacity="1"><tspan fill="#6a9955"># [START cpp_bin]</tspan></text><text x="4381" y="433.4" font-family="Liberation Mono" font-size="3.333" font-weight="bold" xml:space="preserve" fill="#d4d4d4" fill-opacity="1"><tspan fill="#569cd6">executable</tspan><tspan fill="#ffd700">(</tspan><tspan fill="#ce9178">&quot;bin&quot;</tspan><tspan fill="#ffd700">)</tspan> <tspan fill="#ffd700">{</tspan></text><text x="4381" y="437.4" font-family="Liberation Mono" font-size="3.333" font-weight="bold" xml:space="preserve" fill="#d4d4d4" fill-opacity="1">  <tspan fill="#9cdcfe">output_name</tspan> <tspan fill="#d4d4d4">=</tspan> <tspan fill="#ce9178">&quot;hello_world_cpp&quot;</tspan></text><text x="4381" y="441.4" font-family="Liberation Mono" font-size="3.333" font-weight="bold" xml:space="preserve" fill="#d4d4d4" fill-opacity="1">  <tspan fill="#9cdcfe">sources</tspan> <tspan fill="#d4d4d4">=</tspan> <tspan fill="#da70d6">[</tspan> <tspan fill="#ce9178">&quot;hello_world.cc&quot;</tspan> <tspan fill="#da70d6">]</tspan></text><text x="4381" y="445.4" font-family="Liberation Mono" font-size="3.333" font-weight="bold" xml:space="preserve" fill="#d4d4d4" fill-opacity="1"><tspan fill="#ffd700">}</tspan></text><text x="4381" y="453.4" font-family="Liberation Mono" font-size="3.333" font-weight="bold" xml:space="preserve" fill="#d4d4d4" fill-opacity="1"><tspan fill="#6a9955"># [END cpp_bin]</tspan></text><text x="4381" y="461.4" font-family="Liberation Mono" font-size="3.333" font-weight="bold" xml:space="preserve" fill="#d4d4d4" fill-opacity="1"><tspan fill="#6a9955"># [START fuchsia_component]</tspan></text><text x="4381" y="465.4" font-family="Liberation Mono" font-size="3.333" font-weight="bold" xml:space="preserve" fill="#d4d4d4" fill-opacity="1"><tspan fill="#d4d4d4">fuchsia_component</tspan><tspan fill="#ffd700">(</tspan><tspan fill="#ce9178">&quot;hello-world-cpp-component&quot;</tspan><tspan fill="#ffd700">)</tspan> <tspan fill="#ffd700">{</tspan></text><text x="4381" y="469.4" font-family="Liberation Mono" font-size="3.333" font-weight="bold" xml:space="preserve" fill="#d4d4d4" fill-opacity="1">  <tspan fill="#9cdcfe">deps</tspan> <tspan fill="#d4d4d4">=</tspan> <tspan fill="#da70d6">[</tspan> <tspan fill="#ce9178">&quot;:bin&quot;</tspan> <tspan fill="#da70d6">]</tspan></text><text x="4381" y="477.4" font-family="Liberation Mono" font-size="3.333" font-weight="bold" xml:space="preserve" fill="#d4d4d4" fill-opacity="1">  <tspan fill="#6a9955"># Defines the name given to the manifest when included in a fuchsia package.</tspan></text><text x="4381" y="481.4" font-family="Liberation Mono" font-size="3.333" font-weight="bold" xml:space="preserve" fill="#d4d4d4" fill-opacity="1">  <tspan fill="#6a9955"># In this case: &quot;hello-world-cpp.cm&quot;</tspan></text><text x="4381" y="485.4" font-family="Liberation Mono" font-size="3.333" font-weight="bold" xml:space="preserve" fill="#d4d4d4" fill-opacity="1">  <tspan fill="#9cdcfe">component_name</tspan> <tspan fill="#d4d4d4">=</tspan> <tspan fill="#ce9178">&quot;hello-world-cpp&quot;</tspan></text><text x="4381" y="489.4" font-family="Liberation Mono" font-size="3.333" font-weight="bold" xml:space="preserve" fill="#d4d4d4" fill-opacity="1">  <tspan fill="#9cdcfe">manifest</tspan> <tspan fill="#d4d4d4">=</tspan> <tspan fill="#ce9178">&quot;meta/hello_world_cpp.cml&quot;</tspan></text><text x="4381" y="493.4" font-family="Liberation Mono" font-size="3.333" font-weight="bold" xml:space="preserve" fill="#d4d4d4" fill-opacity="1"><tspan fill="#ffd700">}</tspan></text><text x="4381" y="501.4" font-family="Liberation Mono" font-size="3.333" font-weight="bold" xml:space="preserve" fill="#d4d4d4" fill-opacity="1"><tspan fill="#d4d4d4">fuchsia_package</tspan><tspan fill="#ffd700">(</tspan><tspan fill="#ce9178">&quot;hello-world-cpp&quot;</tspan><tspan fill="#ffd700">)</tspan> <tspan fill="#ffd700">{</tspan></text><text x="4381" y="505.4" font-family="Liberation Mono" font-size="3.333" font-weight="bold" xml:space="preserve" fill="#d4d4d4" fill-opacity="1">  <tspan fill="#9cdcfe">deps</tspan> <tspan fill="#d4d4d4">=</tspan> <tspan fill="#da70d6">[</tspan></text><text x="4381" y="509.4" font-family="Liberation Mono" font-size="3.333" font-weight="bold" xml:space="preserve" fill="#d4d4d4" fill-opacity="1">    <tspan fill="#6a9955"># component-url: fuchsia-pkg://fuchsia.com/hello-world-cpp#meta/hello-world-cpp.cm</tspan></text><text x="4381" y="513.4" font-family="Liberation Mono" font-size="3.333" font-weight="bold" xml:space="preserve" fill="#d4d4d4" fill-opacity="1">    <tspan fill="#ce9178">&quot;:hello-world-cpp-component&quot;</tspan><tspan fill="#d4d4d4">,</tspan></text><text x="4381" y="517.4" font-family="Liberation Mono" font-size="3.333" font-weight="bold" xml:space="preserve" fill="#d4d4d4" fill-opacity="1">  <tspan fill="#da70d6">]</tspan></text><text x="4381" y="521.4" font-family="Liberation Mono" font-size="3.333" font-weight="bold" xml:space="preserve" fill="#d4d4d4" fill-opacity="1"><tspan fill="#ffd700">}</tspan></text><text x="4381" y="529.4" font-family="Liberation Mono" font-size="3.333" font-weight="bold" xml:space="preserve" fill="#d4d4d4" fill-opacity="1"><tspan fill="#6a9955"># [END fuchsia_component]</tspan></text><text x="4381" y="537.4" font-family="Liberation Mono" font-size="3.333" font-weight="bold" xml:space="preserve" fill="#d4d4d4" fill-opacity="1"><tspan fill="#6a9955"># [START cpp_test]</tspan></text><text x="4381" y="541.4" font-family="Liberation Mono" font-size="3.333" font-weight="bold" xml:space="preserve" fill="#d4d4d4" fill-opacity="1"><tspan fill="#569cd6">executable</tspan><tspan fill="#ffd700">(</tspan><tspan fill="#ce9178">&quot;unittests&quot;</tspan><tspan fill="#ffd700">)</tspan> <tspan fill="#ffd700">{</tspan></text><text x="4381" y="545.4" font-family="Liberation Mono" font-size="3.333" font-weight="bold" xml:space="preserve" fill="#d4d4d4" fill-opacity="1">  <tspan fill="#9cdcfe">testonly</tspan> <tspan fill="#d4d4d4">=</tspan> <tspan fill="#569cd6">true</tspan></text><text x="4381" y="549.4" font-family="Liberation Mono" font-size="3.333" font-weight="bold" xml:space="preserve" fill="#d4d4d4" fill-opacity="1">  <tspan fill="#9cdcfe">output_name</tspan> <tspan fill="#d4d4d4">=</tspan> <tspan fill="#ce9178">&quot;hello_world_cpp_test_bin&quot;</tspan></text><text x="4381" y="553.4" font-family="Liberation Mono" font-size="3.333" font-weight="bold" xml:space="preserve" fill="#d4d4d4" fill-opacity="1">  <tspan fill="#9cdcfe">sources</tspan> <tspan fill="#d4d4d4">=</tspan> <tspan fill="#da70d6">[</tspan> <tspan fill="#ce9178">&quot;hello_world_unittest.cc&quot;</tspan> <tspan fill="#da70d6">]</tspan></text><text x="4381" y="557.4" font-family="Liberation Mono" font-size="3.333" font-weight="bold" xml:space="preserve" fill="#d4d4d4" fill-opacity="1">  <tspan fill="#9cdcfe">deps</tspan> <tspan fill="#d4d4d4">=</tspan> <tspan fill="#da70d6">[</tspan> <tspan fill="#ce9178">&quot;//src/lib/fxl/test:gtest_main&quot;</tspan> <tspan fill="#da70d6">]</tspan></text><text x="4381" y="561.4" font-family="Liberation Mono" font-size="3.333" font-weight="bold" xml:space="preserve" fill="#d4d4d4" fill-opacity="1"><tspan fill="#ffd700">}</tspan></text><text x="4381" y="569.4" font-family="Liberation Mono" font-size="3.333" font-weight="bold" xml:space="preserve" fill="#d4d4d4" fill-opacity="1"><tspan fill="#6a9955"># [END cpp_test]</tspan></text><text x="4381" y="577.4" font-family="Liberation Mono" font-size="3.333" font-weight="bold" xml:space="preserve" fill="#d4d4d4" fill-opacity="1"><tspan fill="#6a9955"># [START fuchsia_test]</tspan></text><text x="4381" y="581.4" font-family="Liberation Mono" font-size="3.333" font-weight="bold" xml:space="preserve" fill="#d4d4d4" fill-opacity="1"><tspan fill="#d4d4d4">fuchsia_unittest_package</tspan><tspan fill="#ffd700">(</tspan><tspan fill="#ce9178">&quot;hello-world-cpp-unittests&quot;</tspan><tspan fill="#ffd700">)</tspan> <tspan fill="#ffd700">{</tspan></text><text x="4381" y="585.4" font-family="Liberation Mono" font-size="3.333" font-weight="bold" xml:space="preserve" fill="#d4d4d4" fill-opacity="1">  <tspan fill="#9cdcfe">deps</tspan> <tspan fill="#d4d4d4">=</tspan> <tspan fill="#da70d6">[</tspan> <tspan fill="#ce9178">&quot;:unittests&quot;</tspan> <tspan fill="#da70d6">]</tspan></text><text x="4381" y="589.4" font-family="Liberation Mono" font-size="3.333" font-weight="bold" xml:space="preserve" fill="#d4d4d4" fill-opacity="1"><tspan fill="#ffd700">}</tspan></text><text x="4381" y="593.4" font-family="Liberation Mono" font-size="3.333" font-weight="bold" xml:space="preserve" fill="#d4d4d4" fill-opacity="1"><tspan fill="#6a9955"># [END fuchsia_test]</tspan></text><rect x="4324" y="1292" width="58" height="4.4" fill="#cccccc"/><rect x="4324" y="1304.5" width="58" height="4.4" fill="#cccccc"/><rect x="4324" y="1317" width="33" height="4.4" fill="#cccccc"/><rect x="4324" y="1329.5" width="33" height="4.4" fill="#cccccc"/><path d="M4364 1317.5 L4379.5 1333 M4379.5 1317.5 L4364 1333" stroke="#cccccc" stroke-width="4.4" fill="none"/><path d="M4433 1303.2 V1291 Q4433 1288 4436 1288 H4447.8 M4463.5 1288 H4476.5 Q4479.7 1288 4479.7 1291 V1303.2 M4479.7 1318.5 V1331 Q4479.7 1334 4476.5 1334 H4463.5 M4447.8 1334 H4436 Q4433 1334 4433 1331 V1318.5" stroke="#cccccc" stroke-width="4.4" fill="none"/><path d="M4548 1294.5 L4580.5 1327.3 M4580.5 1294.5 L4548 1327.3" stroke="#cccccc" stroke-width="4.4" fill="none"/><path d="M3833.7 1403 A25 25 0 0 1 3864 1443" stroke="#cccccc" stroke-width="4.4" fill="none"/><path d="M3853.5 1518 A26 26 0 0 1 3905 1508" stroke="#cccccc" stroke-width="4.4" fill="none"/><path d="M3759.5 1590.5 L3777.5 1609.25 L3759.5 1628" stroke="#cccccc" stroke-width="4.4" fill="none"/>
</svg>
</body></html>
